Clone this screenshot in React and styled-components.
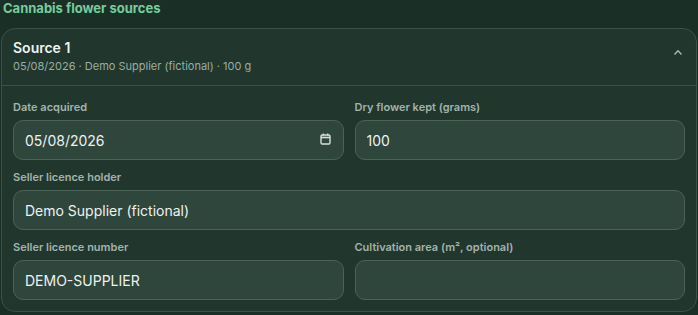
import React from 'react';
import styled, { createGlobalStyle } from 'styled-components';

const GlobalStyle = createGlobalStyle`
  html, body {
    margin: 0;
    padding: 0;
    background: #1a3027;
    font-family: Inter, "Noto Sans", "Liberation Sans", sans-serif;
  }
`;

const Page = styled.div`
  width: 698px;
  height: 315px;
  overflow: hidden;
  background: #1a3027;
`;

const SectionTitle = styled.h2`
  margin: 0;
  padding: 1px 3px 0;
  height: 27px;
  font-size: 13px;
  line-height: 15px;
  font-weight: 700;
  color: #78cc9c;
`;

const Card = styled.section`
  margin: 0 1px;
  border: 1px solid #3b5246;
  border-radius: 14px;
  background: #21372e;
`;

const CardHeader = styled.div`
  height: 56px;
  padding: 0 11px;
  display: flex;
  align-items: flex-start;
  justify-content: space-between;
  border-bottom: 1px solid #3b5246;
`;

const HeaderText = styled.div`
  display: flex;
  flex-direction: column;
  padding-top: 10px;
`;

const SourceName = styled.div`
  font-size: 14px;
  line-height: 17px;
  font-weight: 600;
  color: #eef2ef;
`;

const SourceMeta = styled.div`
  margin-top: 3px;
  font-size: 11px;
  line-height: 14px;
  color: #9aaca2;
`;

const Toggle = styled.button`
  margin-top: 20px;
  margin-right: 2px;
  padding: 0;
  border: none;
  background: transparent;
  color: #a9b8b0;
  display: flex;
  cursor: pointer;
`;

const Body = styled.div`
  padding: 14px 11px 11px;
  display: grid;
  grid-template-columns: 1fr 1fr;
  column-gap: 11px;
  row-gap: 10px;
`;

const Field = styled.label`
  display: flex;
  flex-direction: column;
  gap: 6px;
  grid-column: ${p => (p.$wide ? '1 / -1' : 'auto')};
`;

const Label = styled.span`
  font-size: 11px;
  line-height: 14px;
  font-weight: 600;
  color: #a3b3aa;
`;

const InputWrap = styled.div`
  position: relative;
`;

const Input = styled.input`
  box-sizing: border-box;
  width: 100%;
  height: 40px;
  padding: 0 11px;
  border: 1px solid #4a6356;
  border-radius: 10px;
  background: #2f463c;
  color: #eef2ef;
  font-family: inherit;
  font-size: 14px;
  outline: none;
`;

const CalendarIcon = styled.svg`
  position: absolute;
  right: 13px;
  top: 13px;
  pointer-events: none;
`;

const Calendar = () => (
  <CalendarIcon width="11" height="12" viewBox="0 0 11 12" fill="none">
    <rect x="1" y="2" width="9" height="9" rx="1.2" stroke="#d9e0dc" strokeWidth="1.4" />
    <line x1="1" y1="4.5" x2="10" y2="4.5" stroke="#d9e0dc" strokeWidth="1.6" />
    <line x1="3.3" y1="0.5" x2="3.3" y2="2.5" stroke="#d9e0dc" strokeWidth="1.2" />
    <line x1="7.7" y1="0.5" x2="7.7" y2="2.5" stroke="#d9e0dc" strokeWidth="1.2" />
  </CalendarIcon>
);

const ChevronUp = () => (
  <svg width="10" height="7" viewBox="0 0 10 7" fill="none">
    <polyline points="1.5,5.5 5,1.8 8.5,5.5" stroke="currentColor" strokeWidth="1.4" />
  </svg>
);

const App = () => (
  <Page>
    <GlobalStyle />
    <SectionTitle>Cannabis flower sources</SectionTitle>
    <Card>
      <CardHeader>
        <HeaderText>
          <SourceName>Source 1</SourceName>
          <SourceMeta>05/08/2026 · Demo Supplier (fictional) · 100 g</SourceMeta>
        </HeaderText>
        <Toggle aria-label="Collapse">
          <ChevronUp />
        </Toggle>
      </CardHeader>
      <Body>
        <Field>
          <Label>Date acquired</Label>
          <InputWrap>
            <Input defaultValue="05/08/2026" />
            <Calendar />
          </InputWrap>
        </Field>
        <Field>
          <Label>Dry flower kept (grams)</Label>
          <Input defaultValue="100" />
        </Field>
        <Field $wide>
          <Label>Seller licence holder</Label>
          <Input defaultValue="Demo Supplier (fictional)" />
        </Field>
        <Field>
          <Label>Seller licence number</Label>
          <Input defaultValue="DEMO-SUPPLIER" />
        </Field>
        <Field>
          <Label>Cultivation area (m², optional)</Label>
          <Input defaultValue="" />
        </Field>
      </Body>
    </Card>
  </Page>
);

export default App;
